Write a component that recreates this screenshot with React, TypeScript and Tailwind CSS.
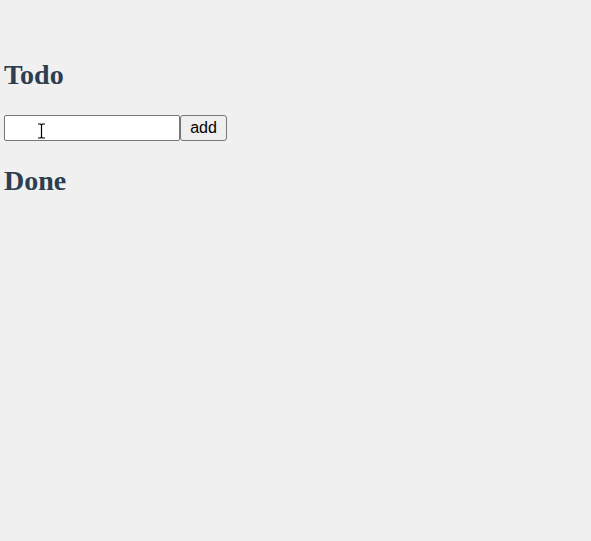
export default function App() {
  return (
    <div className="min-h-[541px] bg-[#f0f0f0] px-1 pt-[59px] font-['Liberation_Sans',Arial,sans-serif]">
      <h2 className="font-['Liberation_Serif','Times_New_Roman',serif] text-[28px] leading-[32px] font-bold text-[#2c3e50]">
        Todo
      </h2>
      <div className="mt-6 flex items-stretch">
        <div className="relative">
          <input
            type="text"
            className="box-border block h-[26px] w-[176px] rounded-[2px] border border-[#767676] bg-white px-[2px] text-[15px] outline-none"
          />
          {/* mouse I-beam cursor */}
          <svg
            className="pointer-events-none absolute left-[33px] top-[8px]"
            width="9"
            height="16"
            viewBox="0 0 9 16"
          >
            <path
              d="M1 1 H3.5 L4.5 2 L5.5 1 H8 M4.5 2 V14 M1 15 H3.5 L4.5 14 L5.5 15 H8"
              fill="none"
              stroke="#000"
              strokeWidth="1.2"
            />
          </svg>
        </div>
        <button className="box-border h-[26px] w-[47px] rounded-[3px] border border-[#767676] bg-[#efefef] text-[16px] text-black">
          add
        </button>
      </div>
      <h2 className="mt-6 font-['Liberation_Serif','Times_New_Roman',serif] text-[28px] leading-[32px] font-bold text-[#2c3e50]">
        Done
      </h2>
    </div>
  );
}
